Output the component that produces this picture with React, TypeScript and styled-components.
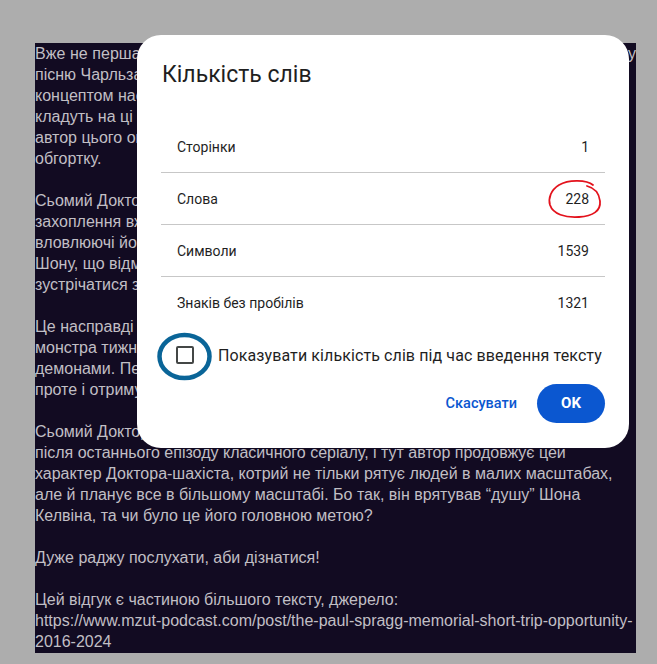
import React from 'react';
import styled, { createGlobalStyle } from 'styled-components';

const GlobalStyle = createGlobalStyle`
  html, body {
    margin: 0;
    padding: 0;
    background: #adadad;
  }
`;

// the first line of the first paragraph runs to the right edge of the page
const paragraphs: string[][] = [
  [
    'Вже не перша історія з цієї збірки, що бере за основу щось відоме, наприклад, у',
    'пісню Чарльза Азнавура, і перетворює її на пригоду Доктора. Тут теж грають із',
    'концептом наслідування: автори беруть знайомі мотиви і по-новому',
    'кладуть на ці рамки. Проте цього разу все вийшло трохи інакше, адже',
    'автор цього оповідання вирішив загорнути свою історію в незвичну',
    'обгортку.',
  ],
  [
    'Сьомий Доктор тут постає в образі шахіста, який грає з долею, і його',
    'захоплення вже не здається безневинним. Він рухає людей, мов фігури,',
    'вловлюючі його задум лише в самому кінці. Найбільше дістається',
    'Шону, що відмовляється вірити, що йому знову доведеться',
    'зустрічатися з минулим.',
  ],
  [
    'Це насправді не зовсім класична історія про',
    'монстра тижня, бо головний конфлікт тут – це боротьба з власними',
    'демонами. Персонажі зіштовхуються з наслідками своїх рішень,',
    'проте і отримують шанс усе виправити.',
  ],
  [
    'Сьомий Доктор у цій історії – той самий маніпулятор, яким він став',
    'після останнього епізоду класичного серіалу, і тут автор продовжує цей',
    'характер Доктора-шахіста, котрий не тільки рятує людей в малих масштабах,',
    'але й планує все в більшому масштабі. Бо так, він врятував “душу” Шона',
    'Келвіна, та чи було це його головною метою?',
  ],
  ['Дуже раджу послухати, аби дізнатися!'],
  [
    'Цей відгук є частиною більшого тексту, джерело:',
    'https://www.mzut-podcast.com/post/the-paul-spragg-memorial-short-trip-opportunity-',
    '2016-2024',
  ],
];

const counts = [
  { label: 'Сторінки', value: '1' },
  { label: 'Слова', value: '228' },
  { label: 'Символи', value: '1539' },
  { label: 'Знаків без пробілів', value: '1321' },
];

const Page = styled.div`
  position: relative;
  height: 664px;
  padding: 43px 0 0 35px;
  box-sizing: border-box;
`;

const Doc = styled.div`
  width: 601px;
  height: 610px;
  background: #120b22;
  color: #c1bfc5;
  font-family: 'Liberation Sans', Arial, sans-serif;
  font-size: 16px;
  line-height: 21px;
  overflow: hidden;
`;

const Para = styled.p`
  margin: 0 0 21px;
`;

const Line = styled.span<{ $fill?: boolean }>`
  display: block;
  white-space: ${(p) => (p.$fill ? 'normal' : 'nowrap')};
  text-align: left;
  text-align-last: ${(p) => (p.$fill ? 'justify' : 'auto')};
`;

const Dialog = styled.div`
  position: absolute;
  left: 137px;
  top: 35px;
  width: 492px;
  height: 413px;
  box-sizing: border-box;
  padding: 24px;
  background: #ffffff;
  border-radius: 24px;
  font-family: Roboto, 'Noto Sans', sans-serif;
  color: #1f1f1f;
`;

const Title = styled.h2`
  margin: 0 0 30px 1px;
  font-size: 23px;
  line-height: 32px;
  font-weight: 400;
  color: #1f1f1f;
`;

const CountList = styled.div`
  display: flex;
  flex-direction: column;
`;

const CountRow = styled.div`
  display: flex;
  align-items: center;
  justify-content: space-between;
  height: 52px;
  padding: 0 16px;
  font-size: 14px;
  border-bottom: 1px solid #c7c7c7;
  box-sizing: border-box;

  &:last-child {
    border-bottom: none;
  }
`;

const CheckRow = styled.label`
  display: flex;
  align-items: center;
  margin: 6px 0 0 4px;
  height: 40px;
`;

const CheckArea = styled.span`
  display: flex;
  align-items: center;
  justify-content: center;
  width: 40px;
  height: 40px;
`;

const CheckBox = styled.span`
  width: 18px;
  height: 18px;
  box-sizing: border-box;
  border: 2px solid #444746;
  border-radius: 2px;
`;

const CheckText = styled.span`
  margin-left: 13px;
  font-size: 16px;
  letter-spacing: 0.1px;
  color: #1f1f1f;
`;

const Actions = styled.div`
  display: flex;
  justify-content: flex-end;
  align-items: center;
  gap: 8px;
  margin-top: 8px;
`;

const TextButton = styled.button`
  height: 40px;
  padding: 0 12px;
  border: none;
  background: transparent;
  color: #0b57d0;
  font-family: Roboto, sans-serif;
  font-size: 14.5px;
  font-weight: 500;
  cursor: pointer;
`;

const FilledButton = styled.button`
  width: 68px;
  height: 39px;
  border: none;
  border-radius: 20px;
  background: #0b57d0;
  color: #ffffff;
  font-family: Roboto, sans-serif;
  font-size: 15px;
  font-weight: 700;
  cursor: pointer;
`;

const Marks = styled.svg`
  position: absolute;
  left: 0;
  top: 0;
  width: 492px;
  height: 413px;
  pointer-events: none;
  overflow: visible;
`;

export default function App() {
  return (
    <Page>
      <GlobalStyle />
      <Doc>
        {paragraphs.map((lines, i) => (
          <Para key={i}>
            {lines.map((line, j) => (
              <Line key={j} $fill={i === 0 && j === 0}>
                {line}
              </Line>
            ))}
          </Para>
        ))}
      </Doc>
      <Dialog>
        <Title>Кількість слів</Title>
        <CountList>
          {counts.map((c) => (
            <CountRow key={c.label}>
              <span>{c.label}</span>
              <span>{c.value}</span>
            </CountRow>
          ))}
        </CountList>
        <CheckRow>
          <CheckArea>
            <CheckBox />
          </CheckArea>
          <CheckText>Показувати кількість слів під час введення тексту</CheckText>
        </CheckRow>
        <Actions>
          <TextButton>Скасувати</TextButton>
          <FilledButton>OK</FilledButton>
        </Actions>
        <Marks viewBox="0 0 492 413">
          <path
            d="M456 150 C450 145 432 144 422 150 C414 155 411 163 413 170 C416 179 428 183 442 182 C456 181 464 176 463 166 C462 158 458 153 450 151"
            fill="none"
            stroke="#e3121c"
            strokeWidth="1.8"
            strokeLinecap="round"
          />
          <ellipse cx="47.5" cy="321.5" rx="25" ry="21.5" fill="none" stroke="#0a6598" strokeWidth="4.5" />
        </Marks>
      </Dialog>
    </Page>
  );
}
